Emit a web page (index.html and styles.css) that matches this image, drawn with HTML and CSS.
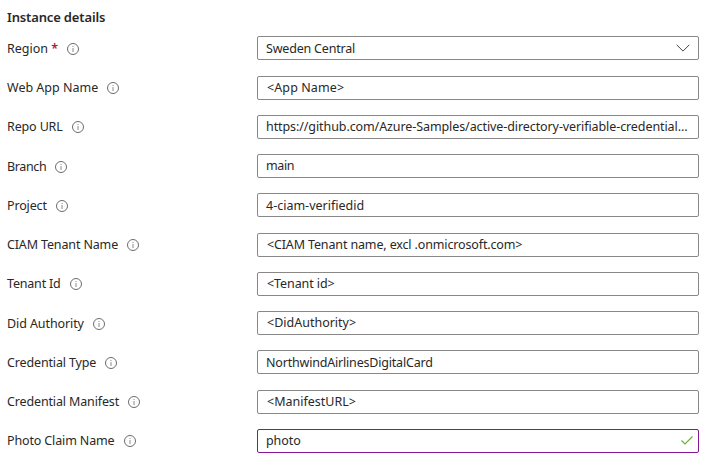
FILE: index.html
```
<!DOCTYPE html>
<html lang="en">
<head>
<meta charset="utf-8">
<title>Instance details</title>
<link rel="stylesheet" href="styles.css">
</head>
<body>
<svg class="symbols" aria-hidden="true">
  <symbol id="info" viewBox="0 0 12 12"><circle cx="6" cy="6" r="5.5" fill="none" stroke="#6e6c6b"/><path d="M6 5v4M6 3v1" fill="none" stroke="#8c8a89"/></symbol>
</svg>
<main class="form">
  <h2 class="title">Instance details</h2>
  <div class="row"><div class="label"><span>Region <b class="required">*</b></span><svg class="info"><use href="#info"/></svg></div><div class="field"><span class="tighter">Sweden Central</span><svg class="chevron" viewBox="0 0 14 8"><path d="M.7.8 7 7.1 13.3.8"/></svg></div></div>
  <div class="row"><div class="label"><span>Web App Name</span><svg class="info"><use href="#info"/></svg></div><div class="field"><span class="token loose">&lt;App Name&gt;</span></div></div>
  <div class="row"><div class="label"><span class="tight">Repo URL</span><svg class="info"><use href="#info"/></svg></div><div class="field"><span class="snug">https://github.com/Azure-Samples/active-directory-verifiable-credential...</span></div></div>
  <div class="row"><div class="label"><span class="tightest">Branch</span><svg class="info"><use href="#info"/></svg></div><div class="field"><span class="tightest">main</span></div></div>
  <div class="row"><div class="label"><span class="tight">Project</span><svg class="info"><use href="#info"/></svg></div><div class="field"><span>4-ciam-verifiedid</span></div></div>
  <div class="row"><div class="label"><span class="tight">CIAM Tenant Name</span><svg class="info"><use href="#info"/></svg></div><div class="field"><span class="token tight">&lt;CIAM Tenant name, excl .onmicrosoft.com&gt;</span></div></div>
  <div class="row"><div class="label"><span class="tighter">Tenant Id</span><svg class="info"><use href="#info"/></svg></div><div class="field"><span class="token snug">&lt;Tenant id&gt;</span></div></div>
  <div class="row"><div class="label"><span class="snug">Did Authority</span><svg class="info"><use href="#info"/></svg></div><div class="field"><span class="token">&lt;DidAuthority&gt;</span></div></div>
  <div class="row"><div class="label"><span class="tight">Credential Type</span><svg class="info"><use href="#info"/></svg></div><div class="field"><span class="tighter">NorthwindAirlinesDigitalCard</span></div></div>
  <div class="row"><div class="label"><span class="tight">Credential Manifest</span><svg class="info"><use href="#info"/></svg></div><div class="field"><span class="token">&lt;ManifestURL&gt;</span></div></div>
  <div class="row"><div class="label"><span class="tight">Photo Claim Name</span><svg class="info"><use href="#info"/></svg></div><div class="field active"><span class="snug">photo</span><svg class="check" viewBox="0 0 12 9"><path d="M.5 4.5 4 8 11.5.5"/></svg></div></div>
</main>
</body>
</html>
```
FILE: styles.css
```
* { box-sizing: border-box; }
body {
  margin: 0;
  background: #fff;
  color: #292827;
  font: 12.5px/18px "Segoe UI", "Noto Sans", sans-serif;
}
.symbols { display: none; }
.form { padding: 8px 8px 0 7px; }
.title { margin: 0 0 10.4px; font-size: 13px; line-height: 18px; font-weight: 600; letter-spacing: -.15px; }
.row { display: grid; grid-template-columns: 250px 442px; height: 39.25px; align-items: start; }
.label { display: flex; align-items: center; gap: 9px; height: 25px; white-space: nowrap; }
.required { color: #a4262c; font-weight: 600; }
.info { width: 12px; height: 12px; flex: none; }
.field {
  display: flex;
  align-items: center;
  justify-content: space-between;
  height: 24px;
  padding: 0 8px;
  border: 1px solid #8a8886;
  border-radius: 2px;
  white-space: nowrap;
}
.field span { padding-top: .6px; }
.field .token { padding-left: 1px; }
.loose { letter-spacing: .1px; }
.snug { letter-spacing: -.09px; }
.tight { letter-spacing: -.14px; }
.tighter { letter-spacing: -.19px; }
.tightest { letter-spacing: -.38px; }
.active { border-color: #881798; padding-right: 5px; }
.chevron { width: 14px; height: 8px; fill: none; stroke: #484644; stroke-width: 1; }
.check { width: 12px; height: 9px; fill: none; stroke: #6bb02e; stroke-width: 1.2; }
```
